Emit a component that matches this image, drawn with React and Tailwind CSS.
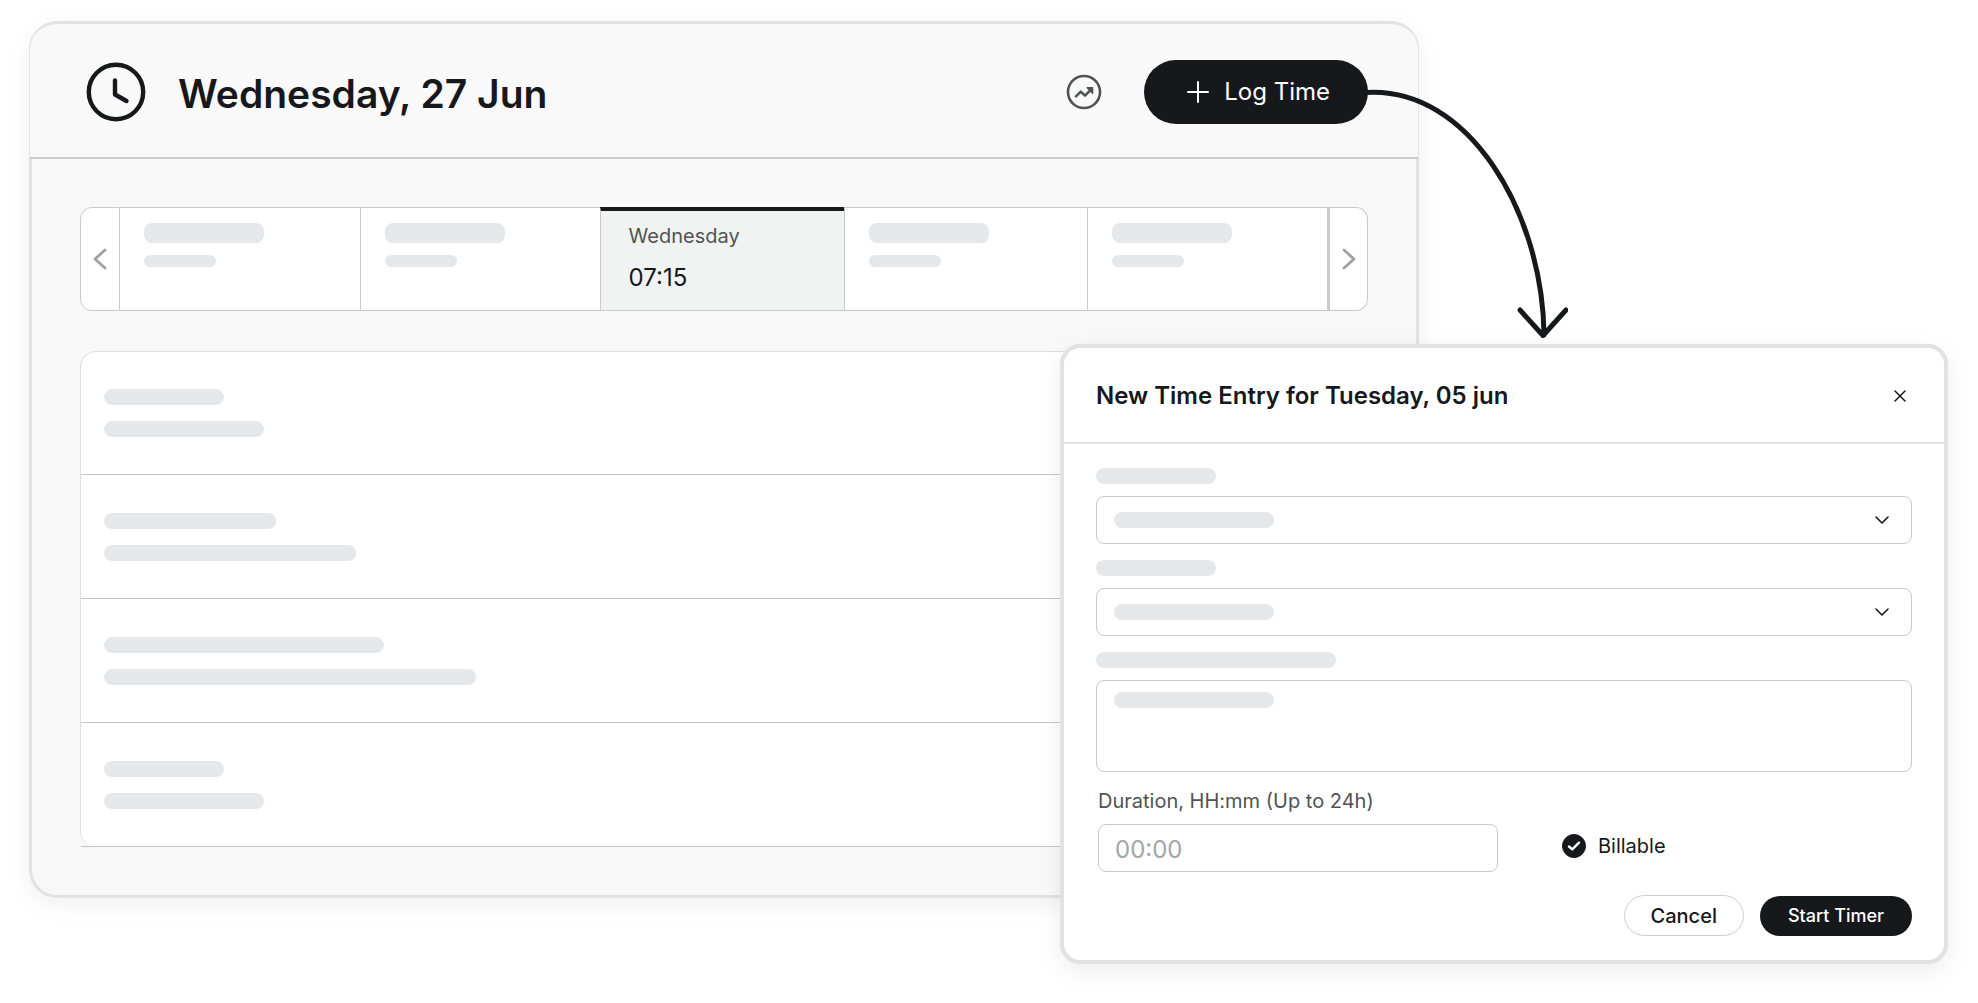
import React from "react";
import { ChevronDown } from "lucide-react";

function Bar({ className }) {
  return <span aria-hidden="true" className={`block rounded-lg bg-[#e4e8eb] ${className}`} />;
}

function ClockIcon() {
  return (
    <svg aria-hidden="true" width="60" height="60" viewBox="0 0 60 60" fill="none" stroke="#17181c" strokeWidth="4.4" strokeLinecap="round" strokeLinejoin="round">
      <circle cx="30" cy="30" r="27.2" />
      <path d="M29 18.5V32.5L40.5 39" />
    </svg>
  );
}

function TrendIcon() {
  return (
    <svg aria-hidden="true" width="36" height="36" viewBox="0 0 36 36" fill="none" stroke="#505353" strokeWidth="2.6" strokeLinecap="round" strokeLinejoin="round">
      <circle cx="18" cy="18" r="16" />
      <path d="M10 22.4L14.8 17.6L19 21.6L25 15.6" />
      <path d="M21.2 13.8H26.6V19.2Z" fill="#505353" strokeWidth="1.4" />
    </svg>
  );
}

function PlusIcon() {
  return (
    <svg aria-hidden="true" width="24" height="24" viewBox="0 0 24 24" fill="none" stroke="currentColor" strokeWidth="2" strokeLinecap="round">
      <path d="M12 2V22M2 12H22" />
    </svg>
  );
}

function Chevron({ flipped }) {
  return (
    <svg aria-hidden="true" width="14" height="22" viewBox="0 0 14 22" fill="none" stroke="#a0a2a2" strokeWidth="2.8" strokeLinecap="round" strokeLinejoin="round">
      <path d={flipped ? "M2 2L12 11L2 20" : "M12 2L2 11L12 20"} />
    </svg>
  );
}

function CurvedArrow() {
  return (
    <svg aria-hidden="true" width="204" height="260" viewBox="0 0 204 260" fill="none" stroke="#17181c" strokeWidth="5" strokeLinecap="round" strokeLinejoin="round" className="pointer-events-none absolute top-7 left-full z-20 -ml-1">
      <path d="M2 4.5C105 -2 179 126 180 247" />
      <path d="M156 222L179 247.5L202 222" />
    </svg>
  );
}

function EmptyDay({ className }) {
  return (
    <div className={`flex flex-col gap-3 pt-[15px] pl-6 ${className}`}>
      <Bar className="h-5 w-[120px] rounded-[10px]" />
      <Bar className="h-3 w-[72px] rounded-[6px]" />
    </div>
  );
}

function SelectField({ id, label }) {
  return (
    <div className="flex flex-col gap-3">
      <label htmlFor={id} aria-label={label} className="self-start">
        <Bar className="h-4 w-[120px]" />
      </label>
      <div className="relative">
        <select id={id} aria-label={label} className="block h-12 w-full appearance-none rounded-lg border border-[#cacaca] bg-white px-4">
          <option value="" aria-label="None" />
        </select>
        <Bar className="pointer-events-none absolute top-4 left-[18px] h-4 w-40" />
        <ChevronDown aria-hidden="true" size={24} strokeWidth={1.6} className="pointer-events-none absolute top-3 right-[18px]" />
      </div>
    </div>
  );
}

const entries = [
  ["w-[120px]", "w-[160px]"],
  ["w-[172px]", "w-[252px]"],
  ["w-[280px]", "w-[372px]"],
  ["w-[120px]", "w-[160px]"],
];

function TimesheetCard() {
  return (
    <main className="mr-[529px] rounded-[28px] shadow-[0_7px_24px_rgba(0,0,0,0.06)]">
      <header className="flex h-[138px] items-center rounded-t-[28px] border-x border-t-[3px] border-b-2 border-x-[#e2e2e2] border-t-[#e2e2e2] border-b-[#cacaca] bg-[#f9f9f9] pt-0.5 pr-[50px] pl-14">
        <ClockIcon />
        <h1 className="ml-8 pt-1 text-[39px] leading-[48px] font-semibold">Wednesday, 27 Jun</h1>
        <button type="button" aria-label="Show trends" className="ml-auto">
          <TrendIcon />
        </button>
        <div className="relative ml-[42px]">
          <button type="button" className="flex h-16 items-center gap-[14px] rounded-full bg-[#17181c] pr-[38px] pl-[42px] text-2xl text-white">
            <PlusIcon />
            Log Time
          </button>
          <CurvedArrow />
        </div>
      </header>
      <div className="flex flex-col gap-10 rounded-b-[28px] border-x-[3px] border-b-[3px] border-[#e2e2e2] bg-[#f8f8f8] p-12">
        <div className="grid h-[104px] grid-cols-[40px_240fr_240fr_245fr_243fr_240fr_41px]">
          <button type="button" aria-label="Previous days" className="flex items-center justify-center rounded-l-xl border border-[#cacaca] bg-white">
            <Chevron />
          </button>
          <EmptyDay className="border-y border-[#cacaca] bg-white" />
          <EmptyDay className="border-y border-l border-[#cacaca] bg-white" />
          <div className="border-t-4 border-b border-l border-x-[#cacaca] border-t-[#17181c] border-b-[#cacaca] bg-[#f1f3f2] pt-[11px] pl-7">
            <p className="text-xl leading-7 text-[#505353]">Wednesday</p>
            <p className="mt-3 text-2xl leading-8">07:15</p>
          </div>
          <EmptyDay className="border-y border-l border-[#cacaca] bg-white" />
          <EmptyDay className="border-y border-l border-[#cacaca] bg-white" />
          <button type="button" aria-label="Next days" className="flex items-center justify-center rounded-r-xl border border-l-[3px] border-[#cacaca] bg-white">
            <Chevron flipped />
          </button>
        </div>
        <ul className="rounded-2xl border-x border-[#dedede] bg-white">
          {entries.map(([first, second], i) => (
            <li key={i} className={`flex h-[124px] flex-col justify-center gap-4 border-b border-[#c6c6c6] pl-[23px] ${i === 0 ? "rounded-t-2xl border-t border-t-[#dedede]" : ""}`}>
              <Bar className={`h-4 ${first}`} />
              <Bar className={`h-4 ${second}`} />
            </li>
          ))}
        </ul>
      </div>
    </main>
  );
}

function TimeEntryDialog() {
  return (
    <div role="dialog" aria-labelledby="entry-title" className="absolute top-[344px] right-[30px] z-10 w-[888px] rounded-[20px] border-4 border-[#e2e2e2] bg-white shadow-[0_8px_24px_rgba(0,0,0,0.07)]">
      <div className="flex h-24 items-center justify-between border-b-2 border-[#e2e2e2] px-8 pt-0.5">
        <h2 id="entry-title" className="text-2xl font-semibold">New Time Entry for Tuesday, 05 jun</h2>
        <button type="button" aria-label="Close" className="flex h-6 w-6 items-center justify-center">
          <svg aria-hidden="true" width="12" height="12" viewBox="0 0 12 12" stroke="currentColor" strokeWidth="1.5" strokeLinecap="round">
            <path d="M1 1L11 11M11 1L1 11" />
          </svg>
        </button>
      </div>
      <form className="flex flex-col gap-4 px-8 py-6" onSubmit={(e) => e.preventDefault()}>
        <SelectField id="project" label="Project" />
        <SelectField id="task" label="Task" />
        <div className="flex flex-col gap-3">
          <label htmlFor="notes" aria-label="Description" className="self-start">
            <Bar className="h-4 w-60" />
          </label>
          <div className="relative">
            <textarea id="notes" aria-label="Description" className="block h-[92px] w-full resize-none rounded-lg border border-[#cacaca] bg-white px-4 py-3" />
            <Bar className="pointer-events-none absolute top-3 left-[18px] h-4 w-40" />
          </div>
        </div>
        <div className="flex items-end gap-16 pl-[2px]">
          <div className="flex flex-col gap-[10px]">
            <label htmlFor="duration" className="text-xl leading-[26px] text-[#505353]">Duration, HH:mm (Up to 24h)</label>
            <input id="duration" type="text" placeholder="00:00" className="h-12 w-[400px] rounded-lg border border-[#cacaca] bg-white px-4 pt-0.5 text-2xl placeholder:text-[#a3a6a5]" />
          </div>
          <label className="flex items-center gap-3 pb-3 text-xl leading-7">
            <span className="relative flex h-6 w-6">
              <input type="checkbox" defaultChecked className="h-6 w-6 appearance-none rounded-full border border-[#17181c] checked:bg-[#17181c]" />
              <svg aria-hidden="true" viewBox="0 0 24 24" fill="none" stroke="white" strokeWidth="2.4" strokeLinecap="round" strokeLinejoin="round" className="pointer-events-none absolute inset-0 h-6 w-6">
                <path d="M7 12.5L10.3 15.3L17 8.7" />
              </svg>
            </span>
            Billable
          </label>
        </div>
        <div className="flex h-12 items-center justify-end gap-4 pt-[7px]">
          <button type="button" className="h-[41px] rounded-full border border-[#cecece] px-[26px] text-xl font-medium">Cancel</button>
          <button type="submit" className="h-10 rounded-full bg-[#17181c] px-7 text-lg font-medium text-white">Start Timer</button>
        </div>
      </form>
    </div>
  );
}

export default function App() {
  return (
    <div className="relative min-h-screen bg-white pt-[21px] pr-[30px] pl-[29px] font-['Inter',sans-serif] text-[#17181c]">
      <TimesheetCard />
      <TimeEntryDialog />
    </div>
  );
}
